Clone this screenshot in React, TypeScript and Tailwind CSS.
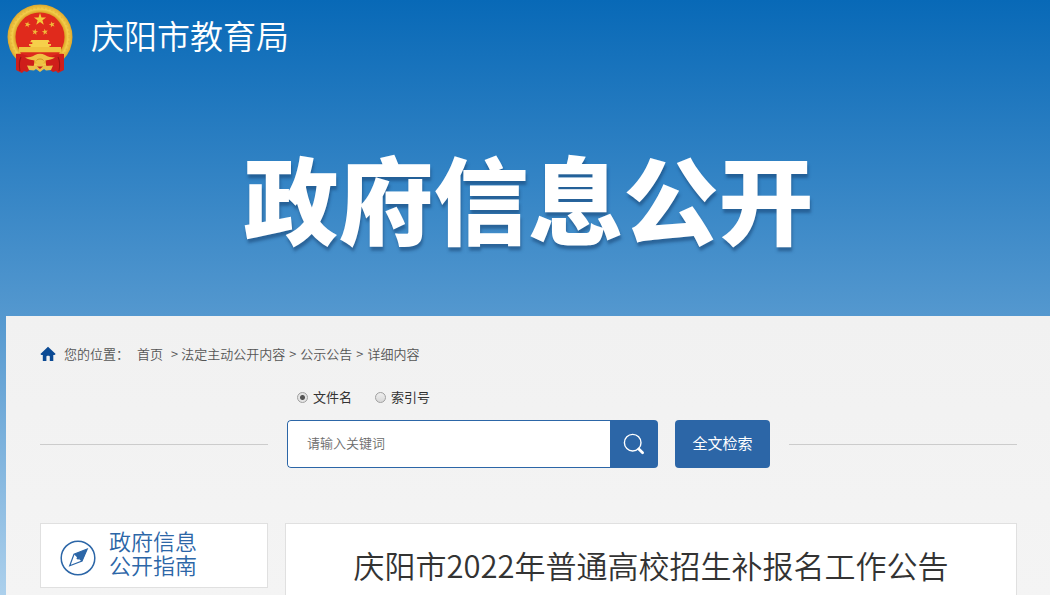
import { useState } from "react";

function star(cx: number, cy: number, r: number, turn = 0) {
  return Array.from({ length: 10 }, (_, i) => {
    const radius = i % 2 === 0 ? r : r * 0.4;
    const angle = ((i * 36 + turn - 90) * Math.PI) / 180;
    return `${(cx + radius * Math.cos(angle)).toFixed(2)},${(cy + radius * Math.sin(angle)).toFixed(2)}`;
  }).join(" ");
}

function Emblem() {
  return (
    <svg viewBox="0 0 66 70" className="h-[70px] w-[66px] shrink-0" role="img" aria-label="国徽">
      <defs>
        <radialGradient id="gold" cx="50%" cy="50%" r="50%">
          <stop offset="0.74" stopColor="#d99a20" />
          <stop offset="0.86" stopColor="#f4cf4b" />
          <stop offset="1" stopColor="#dca62c" />
        </radialGradient>
      </defs>
      <circle cx="33" cy="33" r="32.5" fill="url(#gold)" />
      <circle cx="33" cy="33" r="29" fill="none" stroke="#cf9422" strokeWidth="1.6" strokeDasharray="1.4 2.6" opacity="0.25" />
      <circle cx="33" cy="33" r="24.5" fill="#e02a1c" />
      <polygon points={star(33, 15.5, 6.4)} fill="#f3c93c" />
      <polygon points={star(20.5, 20.5, 3.2, 15)} fill="#f0b93a" />
      <polygon points={star(45, 20.5, 3.2, -15)} fill="#f0b93a" />
      <polygon points={star(28, 28, 3.2, 10)} fill="#f0b93a" />
      <polygon points={star(38, 28, 3.2, -10)} fill="#f0b93a" />
      <path d="M24.5 36h17l1.4 2.3h-1.9v1.6H44v1.8h-1.5v2.3h-19v-2.3H22v-1.8h3.3v-1.6h-2.2z" fill="#f6d04a" />
      <path d="M12 43h42v5.6H12z" fill="#f0c23e" />
      <path d="M13 48.6h40l-5 7H18z" fill="#dd2a1d" />
      <path d="M9 50c6-1 12 1 18 7 1 5-2 8-7 11l-3-1-2 2-6-3z" fill="#cf1e1a" />
      <path d="M57 50c-6-1-12 1-18 7-1 5 2 8 7 11l3-1 2 2 6-3z" fill="#cf1e1a" />
      <path d="M14 53c-2 4-2 9-1 14M51 53c2 4 2 9 1 14" stroke="#991414" strokeWidth="1.1" fill="none" />
      <path d="M18 53.5c4-.3 7-.5 10-2.5 3-1.600 7-1.600 10 0 3 2 6 2.200 10 2.500-3 2-6 2.500-9 2.700l-6 6-6-6c-3-.2-6-.7-9-2.700z" fill="#efc344" />
      <path d="M29.500 56.500c1-2 6-2 7 0" stroke="#c98c1c" strokeWidth="0.9" fill="none" />
      <path d="M20 61.500l8 .5 5-3 5 3 8-.5-2 4.500-5 .5-2-1.500-4 3-4-3-2 1.500-5-.5z" fill="#ebc04a" />
      <path d="M30 62.500h6l-3 2.500z" fill="#c71b18" />
    </svg>
  );
}

function HomeIcon() {
  return (
    <svg viewBox="0 0 16 16" className="h-4 w-4" aria-hidden="true">
      <path d="M8 .7 15.7 8l-1.2.9h-1.2V15H9.8v-4.2a1 1 0 0 0-1-1H7.4a1 1 0 0 0-1 1V15H2.8V8.9H1.4L.4 8z" fill="#0b4a94" />
    </svg>
  );
}

function SearchIcon() {
  return (
    <svg viewBox="0 0 22 22" className="h-[22px] w-[22px]" fill="none" stroke="#fff" aria-hidden="true">
      <circle cx="9.7" cy="9.7" r="8.3" strokeWidth="1.4" />
      <path d="M15.8 16 19.600 19.800" strokeWidth="2.8" strokeLinecap="round" />
    </svg>
  );
}

function CompassIcon() {
  return (
    <svg viewBox="0 0 36 36" className="h-9 w-9 shrink-0" aria-hidden="true">
      <circle cx="18" cy="18" r="16.8" fill="#fff" stroke="#2c66a7" strokeWidth="1.5" />
      <path d="M27.2 9 14 14.3 9.7 25.8 22 21z" fill="#fff" stroke="#2c66a7" strokeWidth="1.2" />
      <path d="M27.2 9 14 14.3l3 3 .6-.4 2 2-.4.7 2.8 2z" fill="#2c66a7" />
      <circle cx="18.1" cy="18.2" r="1.4" fill="#2c66a7" />
    </svg>
  );
}

const radioClass =
  "h-[11px] w-[11px] appearance-none rounded-full border border-[#a0a0a0] bg-linear-to-b from-[#eeeeee] to-[#d8d8d8] checked:bg-[radial-gradient(circle,#555_0_2px,#e4e4e4_3px)]";

const linkClass = "hover:text-[#2c66a7]";

export default function App() {
  const [field, setField] = useState("name");
  const [keyword, setKeyword] = useState("");

  return (
    <div className="flex min-h-screen flex-col bg-[linear-gradient(#0869b7_0px,#5498cf_316px,#acd0ec_595px)] font-['Noto_Sans_CJK_SC','Noto_Sans',sans-serif]">
      <header className="h-[316px]">
        <div className="flex items-start gap-[18px] px-[7px] pt-[4px]">
          <Emblem />
          <span className="text-[33px] leading-[62px] font-[350] text-white">庆阳市教育局</span>
        </div>
        <h1 className="mt-[53px] pl-[7px] text-center text-[95px] leading-[140px] font-black text-white [text-shadow:1px_4px_3px_rgba(20,60,105,0.5)]">
          政府信息公开
        </h1>
      </header>

      <main className="ml-[6px] flex flex-1 flex-col bg-linear-to-b from-[#f1f1f1] to-[#f4f4f4] pr-[33px] pl-[34px]">
        <nav aria-label="您的位置" className="flex items-center pt-[28px] text-[13px] leading-[20px] font-[350] text-[#555]">
          <HomeIcon />
          <span className="ml-2">您的位置：</span>
          <a href="#home" className={`ml-2 ${linkClass}`}>首页</a>
          <span className="mr-[3px] ml-2">&gt;</span>
          <a href="#content" className={linkClass}>法定主动公开内容</a>
          <span className="mx-1">&gt;</span>
          <a href="#notice" className={linkClass}>公示公告</a>
          <span className="mx-1">&gt;</span>
          <span>详细内容</span>
        </nav>

        <form onSubmit={(e) => e.preventDefault()} className="mt-[23px]">
          <div className="ml-[257px] flex gap-[23px] text-[13px] leading-[20px] text-[#333]">
            <label className="flex items-center gap-[5px]">
              <input type="radio" name="field" checked={field === "name"} onChange={() => setField("name")} className={radioClass} />
              文件名
            </label>
            <label className="flex items-center gap-[5px]">
              <input type="radio" name="field" checked={field === "index"} onChange={() => setField("index")} className={radioClass} />
              索引号
            </label>
          </div>
          <div className="mt-[13px] flex items-center">
            <span className="h-px flex-1 bg-[#ccc]" />
            <div className="mx-[19px] flex gap-[17px]">
              <div className="flex h-12 w-[371px] overflow-hidden rounded-[4px]">
                <input
                  type="text"
                  aria-label="关键词"
                  placeholder="请输入关键词"
                  value={keyword}
                  onChange={(e) => setKeyword(e.target.value)}
                  className="min-w-0 flex-1 rounded-l-[4px] border border-r-0 border-[#2c66a7] bg-white pr-3 pb-[2px] pl-[19px] text-[13px] font-[350] text-[#333] outline-none placeholder:text-[#6b6b6b]"
                />
                <button type="submit" aria-label="搜索" className="flex w-12 items-center justify-center bg-[#2c66a7]">
                  <SearchIcon />
                </button>
              </div>
              <button type="button" className="h-12 w-[95px] rounded-[4px] bg-[#2c66a7] pb-[2px] text-[15px] text-white">
                全文检索
              </button>
            </div>
            <span className="h-px flex-1 bg-[#ccc]" />
          </div>
        </form>

        <div className="mt-[55px] flex flex-1 gap-[17px]">
          <aside className="w-[228px] shrink-0">
            <a href="#guide" className="flex h-[65px] items-start gap-[13px] border border-[#e0e0e0] bg-white pt-[4px] pl-[19px] text-[22px] leading-[24px] font-[350] text-[#2c66a7]">
              <span className="pt-3">
                <CompassIcon />
              </span>
              <span>
                政府信息
                <br />
                公开指南
              </span>
            </a>
          </aside>
          <article className="flex-1 border border-b-0 border-[#e0e0e0] bg-white pt-[17px]">
            <h2 className="text-center text-[31px] leading-[48px] font-[350] text-[#333]">
              庆阳市2022年普通高校招生补报名工作公告
            </h2>
          </article>
        </div>
      </main>
    </div>
  );
}
